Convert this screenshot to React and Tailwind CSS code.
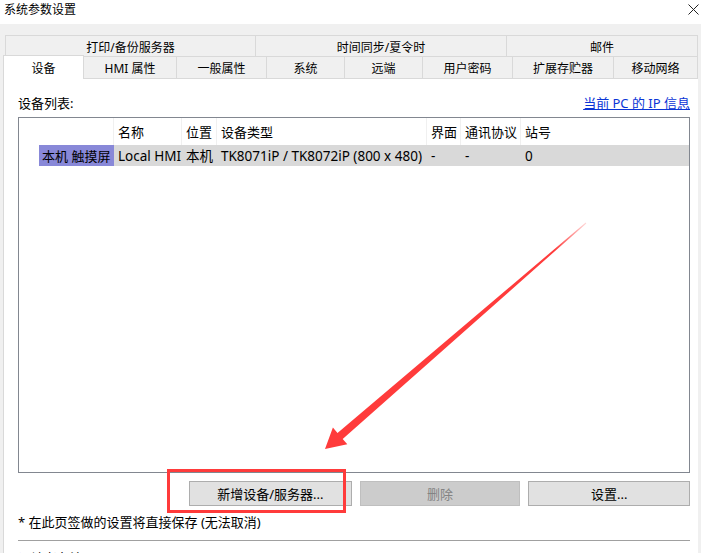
import React from 'react';

const font = { fontFamily: '"Noto Sans", "Noto Sans CJK SC", sans-serif' };

const topTabs = [
    { label: '打印/备份服务器', w: 'w-[250px]' },
    { label: '时间同步/夏令时', w: 'w-[251px]' },
    { label: '邮件', w: 'flex-1' },
];

const tabs = [
    { label: 'HMI 属性', w: 'w-[93px]' },
    { label: '一般属性', w: 'w-[90px]' },
    { label: '系统', w: 'w-[78px]' },
    { label: '远端', w: 'w-[78px]' },
    { label: '用户密码', w: 'w-[90px]' },
    { label: '扩展存贮器', w: 'w-[101px]' },
    { label: '移动网络', w: 'flex-1' },
];

const columns = [
    { key: 'c0', title: '', w: 'w-[95px]' },
    { key: 'c1', title: '名称', w: 'w-[68px]' },
    { key: 'c2', title: '位置', w: 'w-[35px]' },
    { key: 'c3', title: '设备类型', w: 'w-[210px]' },
    { key: 'c4', title: '界面', w: 'w-[34px]' },
    { key: 'c5', title: '通讯协议', w: 'w-[60px]' },
    { key: 'c6', title: '站号', w: 'flex-1' },
];

const row = ['Local HMI', '本机', 'TK8071iP / TK8072iP (800 x 480)', '-', '-', '0'];

const App = () => {
    return (
        <div className="relative w-[701px] h-[553px] overflow-hidden bg-white text-black text-[13px]" style={font}>
            {/* title bar */}
            <div className="h-[24px] flex items-center justify-between pl-[4px] pr-[2px] pb-[4px] bg-white">
                <span className="text-[12px] leading-none">系统参数设置</span>
                <svg width="11" height="11" viewBox="0 0 11 11" className="mb-[2px]">
                    <path d="M0.5 0.5 L10.5 10.5 M10.5 0.5 L0.5 10.5" stroke="#222" strokeWidth="1" />
                </svg>
            </div>

            <div className="bg-[#f0f0f0] pt-[11px] px-[3px] h-[529px] flex flex-col">
                {/* tab row 1 */}
                <div className="flex h-[21px] ml-[2px]">
                    {topTabs.map(t => (
                        <div
                            key={t.label}
                            className={`${t.w} flex items-center justify-center pt-[3px] border-t border-l border-[#d9d9d9] last:border-r text-[12px]`}
                        >
                            {t.label}
                        </div>
                    ))}
                </div>

                {/* tab row 2 */}
                <div className="flex h-[23px]">
                    <div className="w-[81px] flex items-center justify-center pt-[3px] bg-white border-t border-l border-r border-[#d9d9d9] -mt-[1px] h-[24px] z-10 text-[12px]">
                        设备
                    </div>
                    {tabs.map(t => (
                        <div
                            key={t.label}
                            className={`${t.w} flex items-center justify-center pt-[3px] border-t border-r border-b border-[#d9d9d9] text-[12px]`}
                        >
                            {t.label}
                        </div>
                    ))}
                </div>

                {/* panel */}
                <div className="flex-1 bg-white border-l border-[#d9d9d9] pl-[14px] pr-[8px] flex flex-col">
                    <div className="flex justify-between items-center h-[16px] mt-[16px] pt-[1px]">
                        <span>设备列表:</span>
                        <span className="text-[#0a35d6] underline">当前 PC 的 IP 信息</span>
                    </div>

                    <div className="mt-[6px] h-[356px] border border-[#828790] flex flex-col">
                        <div className="flex h-[27px]">
                            {columns.map(c => (
                                <div key={c.key} className={`${c.w} flex items-center pl-[4px] pt-[2px] border-r border-[#f0f0f0] last:border-r-0`}>
                                    {c.title}
                                </div>
                            ))}
                        </div>
                        <div className="flex h-[21px]">
                            <div className="w-[95px] flex pl-[20px]">
                                <div className="flex-1 bg-[#8888d8] flex items-center pl-[3px] pt-[2px]">本机 触摸屏</div>
                            </div>
                            {row.map((v, i) => (
                                <div key={i} className={`${columns[i + 1].w} bg-[#d9d9d9] flex items-center pl-[4px] pt-[2px] text-[13.5px] whitespace-nowrap`}>
                                    {v}
                                </div>
                            ))}
                        </div>
                    </div>

                    {/* buttons */}
                    <div className="flex mt-[8px] h-[25px] pl-[171px] gap-[8px]">
                        <button className="w-[163px] bg-[#e1e1e1] border border-[#adadad] text-[13px] pt-[3px]">新增设备/服务器...</button>
                        <button className="w-[161px] bg-[#cccccc] border border-[#bfbfbf] text-[#838383] text-[13px] pt-[3px]">删除</button>
                        <button className="w-[162px] bg-[#e1e1e1] border border-[#adadad] text-[13px] pt-[3px]">设置...</button>
                    </div>

                    <div className="mt-[8px] h-[16px] flex items-center pt-[1px]">* 在此页签做的设置将直接保存 (无法取消)</div>
                    <div className="mt-[10px] border-t border-[#a0a0a0]"></div>
                    <div className="mt-[6px] pt-[2px]">设计者备注</div>
                </div>
            </div>

            {/* annotation: red box */}
            <div className="absolute left-[167px] top-[469px] w-[179px] h-[44px] border-[3px] border-[#ff3b3b] pointer-events-none"></div>

            {/* annotation: red arrow */}
            <svg className="absolute left-0 top-0 pointer-events-none" width="701" height="553" viewBox="0 0 701 553">
                <defs>
                    <linearGradient id="fade" x1="586" y1="223" x2="325" y2="449" gradientUnits="userSpaceOnUse">
                        <stop offset="0" stopColor="#ff3b3b" stopOpacity="0.2" />
                        <stop offset="0.12" stopColor="#ff3b3b" />
                        <stop offset="1" stopColor="#ff3b3b" />
                    </linearGradient>
                </defs>
                <polygon
                    points="586.3,223.4 342.7,438.9 347.3,444.2 325,449 332.9,427.6 337.5,432.9 585.7,222.6"
                    fill="url(#fade)"
                />
            </svg>
        </div>
    );
};

export default App;
